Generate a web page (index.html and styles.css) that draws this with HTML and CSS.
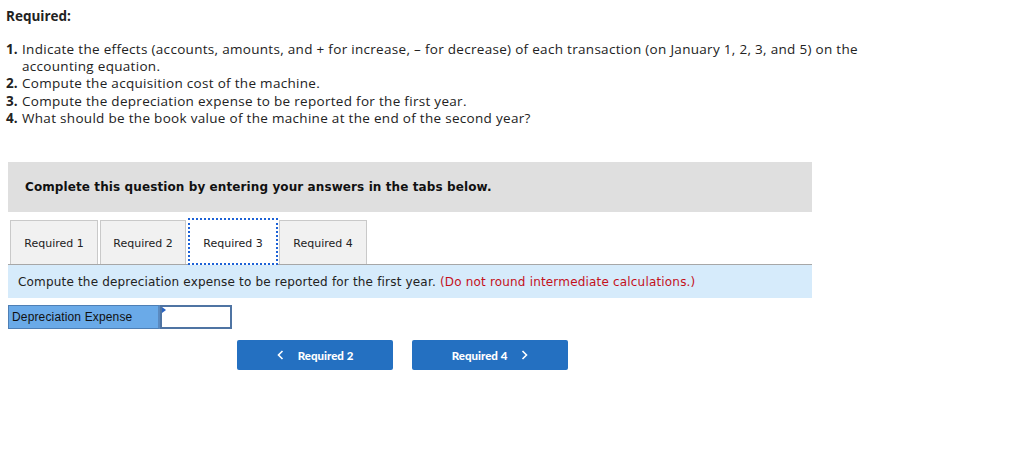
FILE: index.html
```html
<!DOCTYPE html>
<html>
<head>
<meta charset="utf-8">
<link rel="stylesheet" href="styles.css">
</head>
<body>
<div class="page">
  <div class="req-title">Required:</div>
  <ol class="req-list">
    <li><span class="num">1.</span><span class="txt">Indicate the effects (accounts, amounts, and + for increase, – for decrease) of each transaction (on January 1, 2, 3, and 5) on the accounting equation.</span></li>
    <li><span class="num">2.</span><span class="txt">Compute the acquisition cost of the machine.</span></li>
    <li><span class="num">3.</span><span class="txt">Compute the depreciation expense to be reported for the first year.</span></li>
    <li><span class="num">4.</span><span class="txt">What should be the book value of the machine at the end of the second year?</span></li>
  </ol>
  <div class="question">
    <div class="notice">Complete this question by entering your answers in the tabs below.</div>
    <div class="tabs">
      <div class="tab t1">Required 1</div>
      <div class="tab t2">Required 2</div>
      <div class="tab t3 active">Required 3</div>
      <div class="tab t4">Required 4</div>
    </div>
    <div class="prompt">Compute the depreciation expense to be reported for the first year. <span class="warn">(Do not round intermediate calculations.)</span></div>
    <div class="answer">
      <div class="label">Depreciation Expense</div>
      <div class="input"><span class="marker"></span></div>
    </div>
    <div class="nav">
      <div class="btn prev"><svg class="chev" width="7" height="10" viewBox="0 0 7 10"><path d="M5.5 1 L1.5 5 L5.5 9" fill="none" stroke="#fff" stroke-width="1.6"/></svg><span>Required 2</span></div>
      <div class="btn next"><span>Required 4</span><svg class="chev" width="7" height="10" viewBox="0 0 7 10"><path d="M1.5 1 L5.5 5 L1.5 9" fill="none" stroke="#fff" stroke-width="1.6"/></svg></div>
    </div>
  </div>
</div>
</body>
</html>
```
FILE: styles.css
```css
html, body {
  margin: 0;
  padding: 0;
  background: #fff;
}
.page {
  padding-top: 7px;
  font-family: "Open Sans", Lato, sans-serif;
  color: #222;
}
.req-title {
  font-weight: 700;
  font-size: 13.5px;
  line-height: 18px;
  padding-left: 6px;
}
.req-list {
  list-style: none;
  margin: 16px 0 0 0;
  padding: 0 0 0 6px;
  font-size: 13.5px;
  letter-spacing: 0.3px;
  line-height: 17.2px;
}
.req-list li {
  display: flex;
}
.num {
  font-weight: 700;
  width: 16px;
  flex: none;
  letter-spacing: 0;
}
.txt {
  width: 880px;
}
.question {
  margin: 35px 0 0 8px;
  width: 804px;
}
.notice {
  background: #dfdfdf;
  height: 50px;
  box-sizing: border-box;
  padding-left: 17px;
  display: flex;
  align-items: center;
  font-family: "DejaVu Sans", Verdana, sans-serif;
  font-weight: 700;
  font-size: 12px;
  letter-spacing: 0.1px;
  color: #111;
}
.tabs {
  display: flex;
  margin-top: 8px;
  padding-left: 2px;
  gap: 2px;
  height: 44px;
}
.tab {
  box-sizing: border-box;
  height: 44px;
  padding-top: 2px;
  background: #f1f1f1;
  border: 1px solid #c9c9c9;
  border-bottom: none;
  display: flex;
  align-items: center;
  justify-content: center;
  font-family: "DejaVu Sans", Verdana, sans-serif;
  font-size: 11px;
  color: #222;
}
.t1 { width: 88px; }
.t2 { width: 86px; }
.t3 { width: 90px; }
.t4 { width: 88px; margin-left: -1px; }
.tab.active {
  background: #fff;
  border: 2px dotted #1d62d6;
  height: 47px;
  margin-top: -2px;
  padding-top: 3px;
  position: relative;
  z-index: 1;
}
.prompt {
  background: #d6ebfb;
  border-top: 1px solid #a7a7a7;
  height: 34px;
  box-sizing: border-box;
  padding-left: 10px;
  display: flex;
  align-items: center;
  font-family: "DejaVu Sans", Verdana, sans-serif;
  font-size: 12px;
  letter-spacing: 0.18px;
  color: #222;
  white-space: pre;
}
.warn {
  color: #c4111b;
}
.answer {
  display: flex;
  margin-top: 7px;
  height: 24px;
}
.label {
  width: 152px;
  box-sizing: border-box;
  background: #6aaae8;
  border: 1px solid #4e7fb5;
  border-right: 2px solid #5a8ac0;
  padding-left: 3px;
  display: flex;
  align-items: center;
  font-family: "Liberation Sans", Arial, sans-serif;
  font-size: 12px;
  letter-spacing: 0.15px;
  color: #111;
}
.input {
  width: 72px;
  box-sizing: border-box;
  background: #fff;
  border: 2px solid #4f74a3;
  position: relative;
}
.marker {
  position: absolute;
  left: 0;
  top: 0;
  width: 0;
  height: 0;
  border-top: 3px solid transparent;
  border-bottom: 3px solid transparent;
  border-left: 4px solid #2a63c2;
}
.nav {
  display: flex;
  gap: 19px;
  margin: 11px 0 0 229px;
}
.btn {
  width: 156px;
  height: 30px;
  box-sizing: border-box;
  background: #2470c1;
  border-radius: 2px;
  display: flex;
  align-items: center;
  justify-content: center;
  gap: 14px;
  color: #fff;
  font-family: Lato, sans-serif;
  font-weight: 900;
  font-size: 11.5px;
}
.chev { display: block; }
```
